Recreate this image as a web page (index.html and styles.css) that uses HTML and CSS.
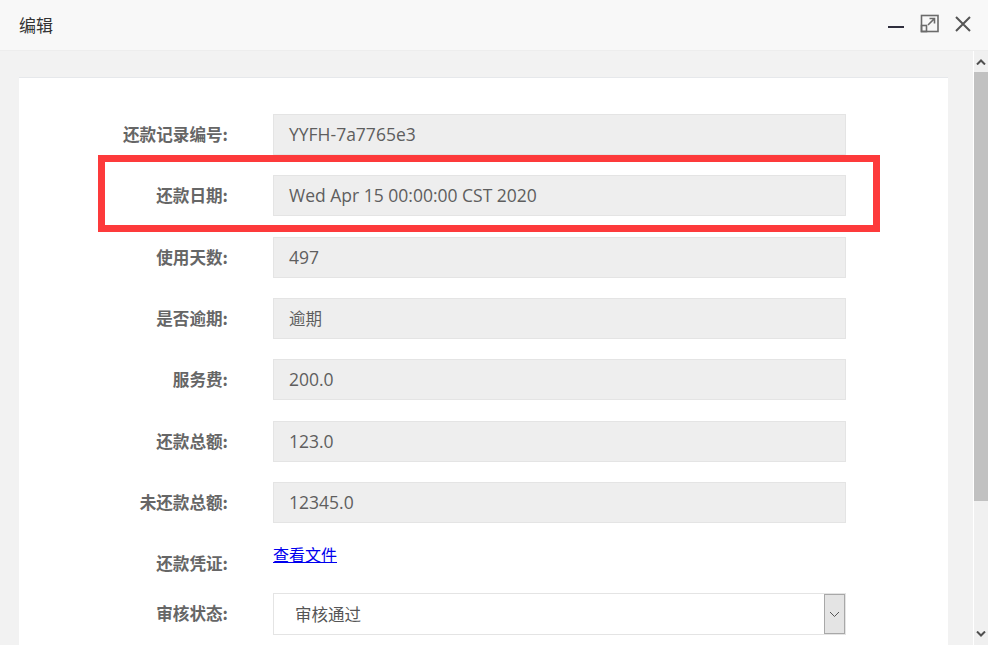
FILE: index.html
```html
<!DOCTYPE html>
<html lang="zh">
<head>
<meta charset="utf-8">
<title>编辑</title>
<link rel="stylesheet" href="styles.css">
</head>
<body>
<div class="dialog">
  <div class="titlebar">
    <span class="title">编辑</span>
    <div class="controls">
      <svg class="ic-min" width="18" height="18" viewBox="0 0 18 18"><path d="M1 10h16" stroke="#2f2e3d" stroke-width="2"/></svg>
      <svg class="ic-max" width="20" height="20" viewBox="0 0 20 20" fill="none" stroke="#6b6b6b" stroke-width="1.6"><rect x="1.5" y="1.5" width="16.5" height="16" /><rect x="1.5" y="11.5" width="5" height="6"/><path d="M8 11L14.5 4.5M9.5 4.5h5v5"/></svg>
      <svg class="ic-close" width="18" height="18" viewBox="0 0 18 18"><path d="M2 2L16 16M16 2L2 16" stroke="#555" stroke-width="2"/></svg>
    </div>
  </div>
  <div class="body">
    <div class="pane">
      <div class="card">
        <div class="row"><label class="label">还款记录编号:</label><div class="input">YYFH-7a7765e3</div></div>
        <div class="row"><label class="label">还款日期:</label><div class="input">Wed Apr 15 00:00:00 CST 2020</div></div>
        <div class="row"><label class="label">使用天数:</label><div class="input">497</div></div>
        <div class="row"><label class="label">是否逾期:</label><div class="input cjk">逾期</div></div>
        <div class="row"><label class="label">服务费:</label><div class="input">200.0</div></div>
        <div class="row"><label class="label">还款总额:</label><div class="input">123.0</div></div>
        <div class="row"><label class="label">未还款总额:</label><div class="input">12345.0</div></div>
        <div class="row row-link"><label class="label">还款凭证:</label><a class="link" href="#">查看文件</a></div>
        <div class="row"><label class="label">审核状态:</label>
          <div class="select"><span class="sel-text">审核通过</span>
            <span class="sel-btn"><svg width="11" height="7" viewBox="0 0 11 7"><path d="M1 1l4.5 4.5L10 1" fill="none" stroke="#555" stroke-width="1"/></svg></span>
          </div>
        </div>
      </div>
      <div class="highlight"></div>
    </div>
    <div class="scrollbar">
      <div class="sb-up"><svg width="10" height="6" viewBox="0 0 10 6"><path d="M1 5.5L5 1.5l4 4" fill="none" stroke="#505050" stroke-width="2"/></svg></div>
      <div class="sb-thumb"></div>
      <div class="sb-track"></div>
      <div class="sb-down"><svg width="10" height="6" viewBox="0 0 10 6"><path d="M1 0.5L5 4.5l4-4" fill="none" stroke="#505050" stroke-width="2"/></svg></div>
    </div>
  </div>
</div>
</body>
</html>
```
FILE: styles.css
```css
* { box-sizing: border-box; }
html, body { margin: 0; padding: 0; }
body {
  width: 988px;
  height: 645px;
  overflow: hidden;
  font-family: "Open Sans", "Noto Sans CJK SC", sans-serif;
  background: #f2f2f2;
}
.dialog { display: flex; flex-direction: column; height: 645px; }
.titlebar {
  height: 51px;
  flex: none;
  background: #f8f8f8;
  border-bottom: 1px solid #ededed;
  display: flex;
  align-items: center;
  justify-content: space-between;
  padding: 0 16px 0 19px;
}
.title {
  font-family: "Noto Sans CJK SC", sans-serif;
  font-size: 17px;
  color: #333;
  margin-top: -2px;
}
.controls { display: flex; align-items: center; gap: 0; }
.ic-min { margin-right: 15px; margin-top: 1px; }
.ic-max { margin-right: 14px; margin-top: -2px; }
.ic-close { margin-top: -2px; }
.body { flex: 1; display: flex; min-height: 0; }
.pane {
  flex: 1;
  position: relative;
  padding: 26px 25px 0 19px;
  background: #f2f2f2;
  border-right: 1px solid #ffffff;
  overflow: hidden;
}
.card {
  background: #fff;
  border-top: 1px solid #e6e8eb;
  padding: 36px 0 40px 0;
  height: 700px;
}
.row {
  display: flex;
  align-items: flex-start;
  margin-bottom: 20.33px;
  height: 41px;
}
.row-link { height: 29.67px; }
.label {
  width: 209px;
  flex: none;
  text-align: right;
  font-family: "Noto Sans CJK SC", sans-serif;
  font-weight: 700;
  font-size: 16.6px;
  color: #666;
  padding-top: 10px;
  line-height: 20px;
  margin-right: 45px;
}
.input {
  width: 573px;
  height: 41px;
  background: #eeeeee;
  border: 1px solid #e4e4e4;
  padding-left: 15px;
  font-size: 17.5px;
  line-height: 39px;
  color: #5e5e5e;
}
.input.cjk { font-family: "Noto Sans CJK SC", sans-serif; font-size: 16.5px; }
.link {
  font-family: "Noto Sans CJK SC", sans-serif;
  font-size: 16px;
  line-height: 20px;
  color: #0000ee;
  text-decoration: underline;
  margin-top: 1px;
}
.select {
  width: 573px;
  height: 42px;
  background: #fff;
  border: 1px solid #e4e4e4;
  display: flex;
  align-items: stretch;
  justify-content: space-between;
}
.sel-text {
  font-family: "Noto Sans CJK SC", sans-serif;
  font-size: 16.5px;
  color: #555;
  line-height: 40px;
  padding-left: 21px;
}
.sel-btn {
  width: 21px;
  background: #e4e4e4;
  border: 1px solid #a8a8a8;
  display: flex;
  align-items: center;
  justify-content: center;
}
.highlight {
  position: absolute;
  left: 98px;
  top: 104px;
  width: 782px;
  height: 77px;
  border: 7px solid #fd3a3b;
}
.scrollbar {
  width: 14px;
  flex: none;
  display: flex;
  flex-direction: column;
  background: #f0f0f0;
}
.sb-up { height: 21px; display: flex; align-items: center; justify-content: center; }
.sb-thumb { height: 429px; background: #c1c1c1; flex: none; }
.sb-track { flex: 1; }
.sb-down { height: 17px; display: flex; align-items: flex-start; justify-content: center; padding-top: 3px; }
```
